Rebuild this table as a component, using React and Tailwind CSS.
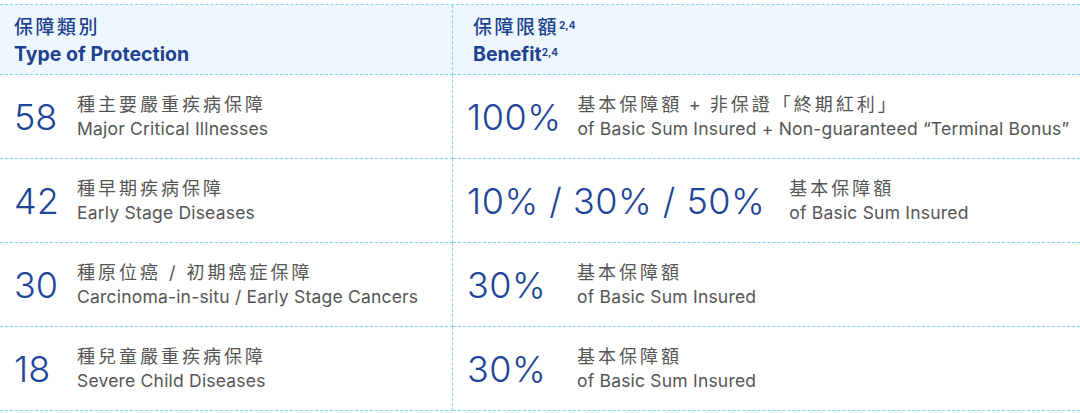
import React from "react";

const rows = [
  {
    count: "58",
    zh: "種主要嚴重疾病保障",
    en: "Major Critical Illnesses",
    benefit: "100%",
    gap: "pr-[16px]",
    benefitZh: "基本保障額\u2009+\u2009非保證「終期紅利」",
    benefitEn: "of Basic Sum Insured + Non-guaranteed “Terminal Bonus”",
  },
  {
    count: "42",
    zh: "種早期疾病保障",
    en: "Early Stage Diseases",
    benefit: "10% / 30% / 50%",
    gap: "pr-[24px]",
    benefitZh: "基本保障額",
    benefitEn: "of Basic Sum Insured",
  },
  {
    count: "30",
    zh: "種原位癌 / 初期癌症保障",
    en: "Carcinoma-in-situ / Early Stage Cancers",
    benefit: "30%",
    gap: "pr-[16px]",
    benefitZh: "基本保障額",
    benefitEn: "of Basic Sum Insured",
  },
  {
    count: "18",
    zh: "種兒童嚴重疾病保障",
    en: "Severe Child Diseases",
    benefit: "30%",
    gap: "pr-[16px]",
    benefitZh: "基本保障額",
    benefitEn: "of Basic Sum Insured",
  },
];

const Label = ({ zh, en }) => (
  <div className="flex flex-col whitespace-nowrap">
    <span className="text-[18px] leading-[24px] tracking-[3px] text-[#555]">{zh}</span>
    <span className="text-[17.5px] leading-[24px] tracking-[0.2px] text-[#555]">{en}</span>
  </div>
);

const App = () => {
  return (
    <div className="w-[1080px] h-[413px] bg-white pt-[4px] font-['Inter','Noto_Sans_CJK_TC',sans-serif]">
      <div className="grid grid-cols-[453px_1fr] border-t border-dashed border-[#7dd6f6]">
        {/* header */}
        <div className="h-[70px] bg-[#eef7fe] border-b border-r border-dashed border-[#7dd6f6] pl-[14px] pt-[10px] text-[#1f4290]">
          <div className="text-[19px] leading-[26px] tracking-[2.5px] font-medium">保障類別</div>
          <div className="text-[19.5px] leading-[26px] font-bold">Type of Protection</div>
        </div>
        <div className="h-[70px] bg-[#eef7fe] border-b border-dashed border-[#7dd6f6] pl-[20px] pt-[10px] text-[#1f4290]">
          <div className="text-[19px] leading-[26px] tracking-[2.5px] font-medium">
            保障限額<sup className="text-[10px] tracking-normal font-bold">2,4</sup>
          </div>
          <div className="text-[19.5px] leading-[26px] font-bold">
            Benefit<sup className="text-[10px] font-bold">2,4</sup>
          </div>
        </div>

        {rows.map((row) => (
          <React.Fragment key={row.count}>
            <div className="h-[84px] flex items-center border-b border-r border-dashed border-[#7dd6f6] pl-[14px]">
              <span className="w-[63px] text-[36px] font-light text-[#1e4597]">{row.count}</span>
              <Label zh={row.zh} en={row.en} />
            </div>
            <div className="h-[84px] flex items-center border-b border-dashed border-[#7dd6f6] pl-[14px]">
              <span
                className={`min-w-[110px] ${row.gap} text-[36px] tracking-[0.5px] font-light text-[#1e4597] whitespace-nowrap`}
              >
                {row.benefit}
              </span>
              <Label zh={row.benefitZh} en={row.benefitEn} />
            </div>
          </React.Fragment>
        ))}
      </div>
    </div>
  );
};

export default App;
